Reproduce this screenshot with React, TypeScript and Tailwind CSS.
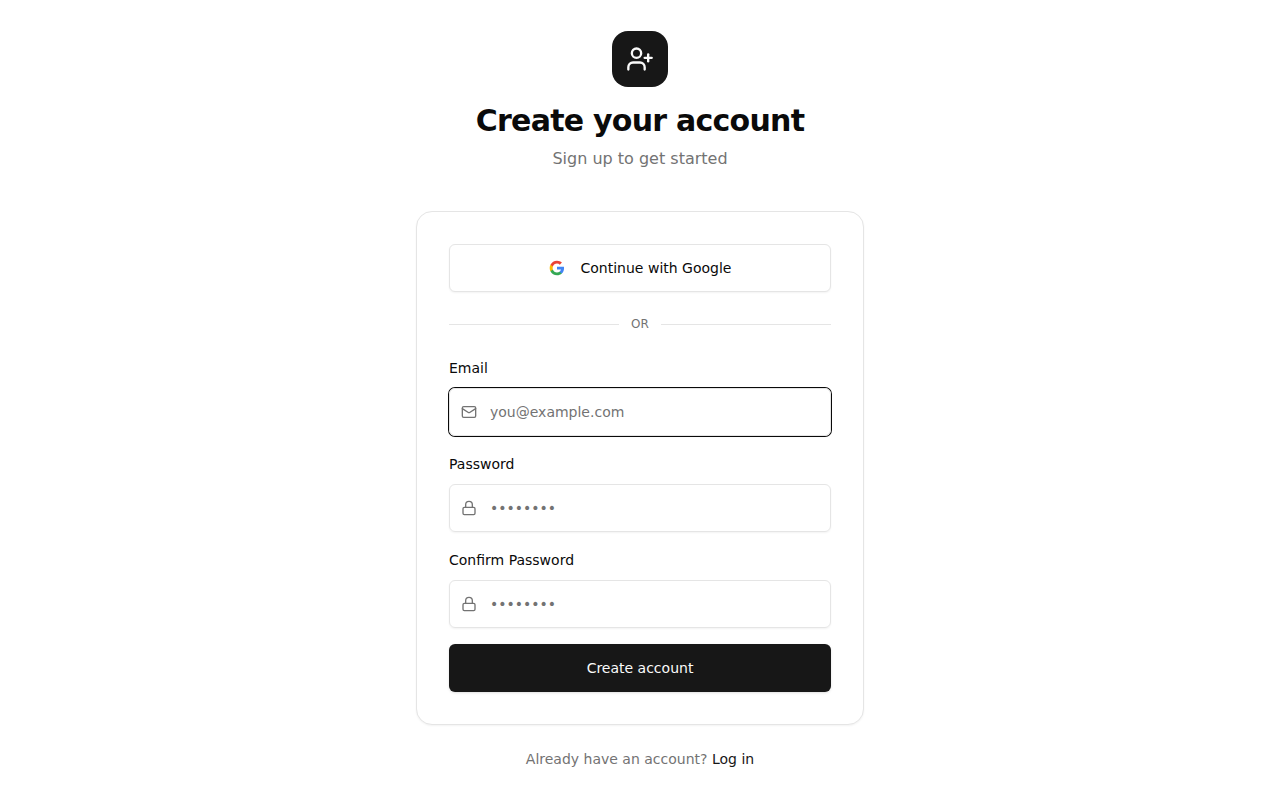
import React, { useState } from 'react';
import { Lock, Mail, UserPlus } from 'lucide-react';
import type { LucideIcon } from 'lucide-react';

interface FieldProps {
  id: string;
  label: string;
  type: string;
  placeholder: string;
  icon: LucideIcon;
  value: string;
  onChange: (value: string) => void;
  autoComplete: string;
  autoFocus?: boolean;
}

function Field({ id, label, icon: Icon, onChange, ...props }: FieldProps) {
  return (
    <div className="space-y-2">
      <label htmlFor={id} className="block text-sm leading-6 font-medium">
        {label}
      </label>
      <div className="relative">
        <Icon className="pointer-events-none absolute top-1/2 left-3 h-4 w-4 -translate-y-1/2 text-neutral-500" />
        <input
          id={id}
          name={id}
          required
          onChange={(e) => onChange(e.target.value)}
          className="block h-12 w-full rounded-md border border-neutral-200 bg-transparent py-1 pr-3 pl-10 text-sm shadow-xs outline-none placeholder:text-neutral-500 focus-visible:ring-1 focus-visible:ring-neutral-950"
          {...props}
        />
      </div>
    </div>
  );
}

function GoogleIcon() {
  return (
    <svg className="h-4 w-4" viewBox="0 0 24 24" aria-hidden="true">
      <path
        fill="#4285F4"
        d="M22.56 12.25c0-.78-.07-1.53-.2-2.25H12v4.26h5.92c-.26 1.37-1.04 2.53-2.21 3.31v2.77h3.57c2.08-1.92 3.28-4.74 3.28-8.09z"
      />
      <path
        fill="#34A853"
        d="M12 23c2.97 0 5.46-.98 7.28-2.66l-3.57-2.77c-.98.66-2.23 1.06-3.71 1.06-2.86 0-5.29-1.93-6.16-4.53H2.18v2.84C3.99 20.53 7.7 23 12 23z"
      />
      <path
        fill="#FBBC05"
        d="M5.84 14.09c-.22-.66-.35-1.36-.35-2.09s.13-1.43.35-2.09V7.07H2.18C1.43 8.55 1 10.22 1 12s.43 3.45 1.18 4.93l2.85-2.22.81-.62z"
      />
      <path
        fill="#EA4335"
        d="M12 5.38c1.62 0 3.06.56 4.21 1.64l3.15-3.15C17.45 2.09 14.97 1 12 1 7.7 1 3.99 3.47 2.18 7.07l3.66 2.84c.87-2.6 3.3-4.53 6.16-4.53z"
      />
    </svg>
  );
}

export default function App() {
  const [email, setEmail] = useState('');
  const [password, setPassword] = useState('');
  const [confirm, setConfirm] = useState('');

  return (
    <main className="flex min-h-screen items-center justify-center bg-white px-4 font-['DejaVu_Sans',sans-serif] text-neutral-950">
      <div className="w-full max-w-md">
        {/* Header */}
        <div className="mb-10 text-center">
          <div className="mx-auto mb-4 flex h-14 w-14 items-center justify-center rounded-2xl bg-neutral-900 text-neutral-50">
            <UserPlus className="h-7 w-7" />
          </div>
          <h1 className="text-3xl font-bold tracking-tight">Create your account</h1>
          <p className="mt-2 text-neutral-500">Sign up to get started</p>
        </div>

        {/* Card */}
        <div className="rounded-2xl border border-neutral-200 bg-white p-8 shadow-xs">
          <button
            type="button"
            className="flex h-12 w-full items-center justify-center gap-4 rounded-md border border-neutral-200 bg-white text-sm font-medium shadow-xs hover:bg-neutral-100"
          >
            <GoogleIcon />
            Continue with Google
          </button>

          <div className="my-6 flex items-center gap-3">
            <div className="h-px flex-1 bg-neutral-200" />
            <span className="text-xs text-neutral-500">OR</span>
            <div className="h-px flex-1 bg-neutral-200" />
          </div>

          <form className="space-y-4" onSubmit={(e) => e.preventDefault()}>
            <Field
              id="email"
              label="Email"
              type="email"
              placeholder="you@example.com"
              icon={Mail}
              value={email}
              onChange={setEmail}
              autoComplete="email"
              autoFocus
            />
            <Field
              id="password"
              label="Password"
              type="password"
              placeholder="••••••••"
              icon={Lock}
              value={password}
              onChange={setPassword}
              autoComplete="new-password"
            />
            <Field
              id="confirm-password"
              label="Confirm Password"
              type="password"
              placeholder="••••••••"
              icon={Lock}
              value={confirm}
              onChange={setConfirm}
              autoComplete="new-password"
            />
            <button
              type="submit"
              className="flex h-12 w-full items-center justify-center rounded-md bg-neutral-900 text-sm font-medium text-neutral-50 shadow-sm hover:bg-neutral-800"
            >
              Create account
            </button>
          </form>
        </div>

        {/* Footer */}
        <p className="mt-6 text-center text-sm text-neutral-500">
          Already have an account?{' '}
          <a href="#login" className="font-medium text-neutral-900 hover:underline">
            Log in
          </a>
        </p>
      </div>
    </main>
  );
}
